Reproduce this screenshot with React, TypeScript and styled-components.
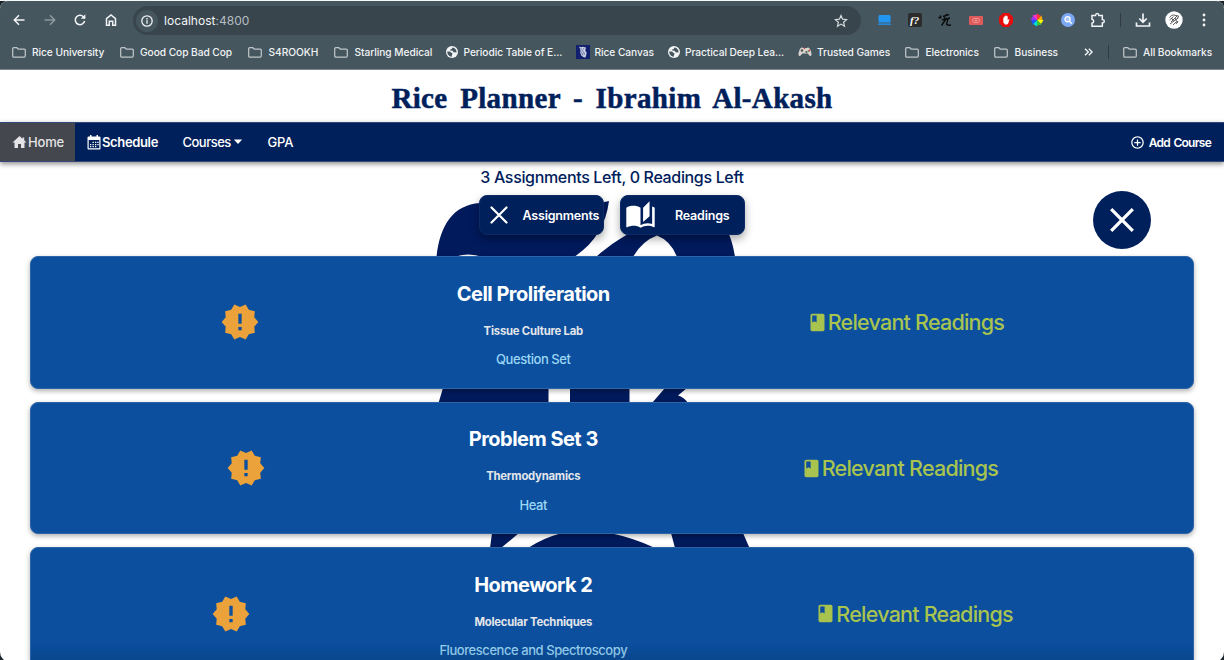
import React from "react";
import styled, { createGlobalStyle } from "styled-components";
import { MdNewReleases, MdClass, MdAutoStories, MdAddCircleOutline } from "react-icons/md";

const GlobalStyle = createGlobalStyle`
  * { box-sizing: border-box; }
  body {
    margin: 0;
    overflow: hidden;
    background: #1c2529;
    font-family: Inter, "Liberation Sans", sans-serif;
  }
  svg { display: block; flex: none; }
`;

const Viewport = styled.div`
  height: 660px;
  overflow: hidden;
  border-top: 1px solid #f4f6f7;
`;

const Window = styled.div`
  height: 661px;
  display: flex;
  flex-direction: column;
  border-radius: 8px 8px 10px 10px;
  overflow: hidden;
  background: #fff;
`;

/* ---------- browser chrome ---------- */

const Chrome = styled.header`
  flex: none;
  height: 69px;
  background: #46565f;
  border-bottom: 1px solid #7d888e;
  color: #f1f4f5;
`;

const AddressRow = styled.div`
  display: flex;
  align-items: center;
  height: 38px;
  padding: 0 12px;
`;

const NavIcons = styled.div`
  display: flex;
  gap: 16.5px;
  width: 121px;
`;

const AddressBar = styled.div`
  display: flex;
  align-items: center;
  width: 728px;
  height: 29px;
  margin-top: 1px;
  padding: 0 13px 0 3px;
  border-radius: 15px;
  background: #39454c;
`;

const InfoBadge = styled.span`
  display: grid;
  place-items: center;
  width: 22px;
  height: 22px;
  border-radius: 50%;
  background: #46565f;
`;

const Url = styled.span`
  flex: 1;
  padding-left: 6px;
  font-size: 12px;
  letter-spacing: 0.02px;
  color: #f3f5f6;
`;

const Port = styled.span`
  color: #b5bdc1;
`;

const Extensions = styled.div`
  display: flex;
  align-items: center;
  gap: 12.6px;
  margin-left: 14px;
`;

const Slot = styled.span`
  display: grid;
  place-items: center;
  width: 18px;
  height: 18px;
`;

const FnBadge = styled.span`
  display: grid;
  place-items: center;
  width: 14px;
  height: 14px;
  border-radius: 2px;
  background: #2c2c2c;
  color: #fff;
  font: italic bold 11px/14px "Liberation Serif", serif;
`;

const Divider = styled.span<{ $h: number }>`
  width: 1px;
  height: ${(p) => p.$h}px;
  background: #2f3b41;
`;

const ChromeEnd = styled.div`
  display: flex;
  align-items: center;
  gap: 14px;
  margin-left: 13px;
`;

const Kebab = styled.svg`
  margin-left: 5px;
`;

const BookmarkRow = styled.nav`
  display: flex;
  align-items: center;
  height: 26px;
  padding-left: 12px;
  font-size: 10.2px;
  font-weight: 500;
  letter-spacing: -0.06px;
`;

const Bookmark = styled.span<{ $w: number; $gap: number }>`
  display: flex;
  flex: none;
  align-items: center;
  gap: ${(p) => p.$gap}px;
  width: ${(p) => p.$w}px;
  white-space: nowrap;
`;

const More = styled.span`
  width: 24px;
`;

/* ---------- site header ---------- */

const Title = styled.h1`
  flex: none;
  margin: 0;
  height: 52px;
  color: #00205b;
  text-align: center;
  font: bold 29px/56px "Liberation Serif", serif;
  letter-spacing: 0.35px;
  word-spacing: 5px;
  -webkit-text-stroke: 0.5px #00205b;
`;

const NavBar = styled.nav`
  position: relative;
  z-index: 2;
  flex: none;
  display: flex;
  align-items: center;
  height: 40px;
  background: #00205b;
  border-top: 1px solid #34497a;
  border-bottom: 1px solid #34497a;
  box-shadow: 0 2px 5px rgba(0, 0, 0, 0.45);
  color: #fff;
  font-size: 13px;
  font-weight: 500;
`;

const NavItem = styled.a<{ $active?: boolean; $w: number; $ls?: number; $bold?: boolean }>`
  display: flex;
  align-items: center;
  gap: 1px;
  width: ${(p) => p.$w}px;
  height: 100%;
  padding-left: 12px;
  background: ${(p) => (p.$active ? "#44474d" : "transparent")};
  color: ${(p) => (p.$active ? "#e4e4e6" : "#fff")};
  font-weight: ${(p) => (p.$bold ? 600 : 500)};
  letter-spacing: ${(p) => p.$ls ?? 0}px;
`;

const Caret = styled.svg`
  margin-left: 1px;
`;

const AddCourse = styled.a`
  display: flex;
  align-items: center;
  gap: 4px;
  margin-left: auto;
  padding-right: 13px;
  font-size: 12px;
  font-weight: 600;
  letter-spacing: -0.73px;
  word-spacing: 1px;
`;

/* ---------- content ---------- */

const Content = styled.main`
  position: relative;
  flex: 1;
  min-height: 0;
  padding: 0 30px;
`;

const Mark = styled.svg`
  position: absolute;
  left: 420px;
  top: 29px;
  z-index: 0;
`;

const Summary = styled.p`
  position: relative;
  margin: 0;
  height: 33px;
  padding-top: 5px;
  text-align: center;
  color: #00205b;
  font-size: 16px;
  line-height: 21px;
  font-weight: 500;
  letter-spacing: -0.34px;
`;

const Tabs = styled.div`
  position: relative;
  display: flex;
  justify-content: center;
  gap: 16px;
  height: 61px;
`;

const Tab = styled.button<{ $pad: number; $gap: number }>`
  display: flex;
  align-items: center;
  gap: ${(p) => p.$gap}px;
  width: 125px;
  height: 40px;
  padding: 0 0 0 ${(p) => p.$pad}px;
  border: 1px solid #0b2a66;
  border-radius: 8px;
  background: #00205b;
  box-shadow: 0 4px 9px rgba(0, 0, 0, 0.35);
  color: #fff;
  font: 600 12.5px Inter, "Liberation Sans", sans-serif;
  letter-spacing: -0.2px;
`;

const CloseFab = styled.button`
  position: absolute;
  z-index: 1;
  left: 1093px;
  top: 29px;
  display: grid;
  place-items: center;
  width: 58px;
  height: 58px;
  padding: 0;
  border: 0;
  border-radius: 50%;
  background: #00205b;
`;

const Cards = styled.section`
  position: relative;
  display: grid;
  gap: 13px;
`;

const Card = styled.article`
  display: flex;
  justify-content: space-evenly;
  align-items: center;
  column-gap: 8px;
  height: 132.7px;
  border: 1px solid #2b65a8;
  border-radius: 8px;
  background: #0b4f9e;
  box-shadow: 0 2px 5px rgba(0, 0, 0, 0.32);
`;

const Details = styled.div`
  display: flex;
  flex-direction: column;
  align-items: center;
  padding-top: 5px;
  white-space: nowrap;
`;

const Name = styled.h2`
  margin: 0;
  color: #fff;
  font-size: 20px;
  line-height: 26px;
  font-weight: 700;
  letter-spacing: -0.52px;
`;

const Course = styled.h3`
  margin: 15px 0 0;
  color: #e3e6ea;
  font-size: 11.3px;
  line-height: 18px;
  font-weight: 700;
  letter-spacing: -0.22px;
`;

const Kind = styled.p`
  margin: 9.500px 0 0;
  color: #9bd7f5;
  font-size: 13px;
  line-height: 20px;
  font-weight: 500;
  letter-spacing: -0.44px;
`;

const Readings = styled.a`
  display: flex;
  align-items: center;
  color: #a8c44f;
  font-size: 21.5px;
  font-weight: 500;
  letter-spacing: -0.77px;
  white-space: nowrap;
`;

const BottomShade = styled.div`
  position: absolute;
  left: 31px;
  right: 31px;
  bottom: 0;
  height: 20px;
  background: linear-gradient(rgba(0, 25, 60, 0), rgba(0, 25, 60, 0.18));
`;

const Folder = () => (
  <svg width="14" height="11" viewBox="0 0 14 11" fill="none" stroke="#bfc5c8" strokeWidth="1.25">
    <path d="M.7 9V1.800Q.7.7 1.800.7h3l1.500 1.500h5.900q1.100 0 1.100 1.100V9q0 1.200-1.100 1.200H1.800Q.7 10.200.7 9z" />
  </svg>
);

const Globe = () => (
  <svg width="12" height="12" viewBox="0 0 12 12">
    <circle cx="6" cy="6" r="6" fill="#f2f4f5" />
    <path d="M1.300 5.500h2.200q1.300.1 1.500 1.200l1.300.3q.6 1-.4 1.800v1.900C3 10.600 1.100 8.300 1.300 5.500zM6.300 1.400L5.800 3 4.200 3.600v1l2.300.2L7.600 6.200l2.900.3C10.900 4 9 1.700 6.300 1.400z" fill="#46565f" />
  </svg>
);

const Owl = () => (
  <svg width="14" height="14" viewBox="0 0 14 14">
    <rect width="14" height="14" fill="#10206f" />
    <path d="M3 1.500l2 .8 1.500-.6 2 .6 1-.3.300 2-.6 1.200 1.500 2.500-.6 2.800-.6 2-1.800-.3-2.300-1.500-1.300-3.200.3-2.500z" fill="#c9cfe3" />
    <path d="M4.500 3.500l1.300.6M7 4l1.200-.5M6.300 4.800v1.400M5.500 7.300l1.500 3M7.500 6.500l1 3M4.200 6l1 .6" stroke="#10206f" strokeWidth=".6" />
  </svg>
);

const Gamepad = () => (
  <svg width="14" height="10" viewBox="0 0 14 10">
    <path d="M3 .8Q4.500.2 5.300 1h3.400Q9.500.2 11 .8q1.300.8 2.200 4.200.7 3.500-.4 4-1.300.4-3-2.500H4.200Q2.500 9.400 1.200 9 .1 8.500.8 5 1.700 1.600 3 .8z" fill="#d8d4d0" />
    <circle cx="4" cy="3.500" r="1.300" fill="#555" />
    <circle cx="8.400" cy="5" r="1" fill="#555" />
    <circle cx="6.500" cy="1.300" r=".8" fill="#d8362c" />
    <circle cx="11.300" cy="3.500" r=".9" fill="#d8362c" />
    <circle cx="10.200" cy="4.500" r=".8" fill="#35a14b" />
  </svg>
);

const icons = { folder: Folder, globe: Globe, owl: Owl, pad: Gamepad };

const bookmarks: { icon: keyof typeof icons; text: string; w: number; gap: number }[] = [
  { icon: "folder", text: "Rice University", w: 108, gap: 6 },
  { icon: "folder", text: "Good Cop Bad Cop", w: 128, gap: 6 },
  { icon: "folder", text: "S4ROOKH", w: 86, gap: 6.5 },
  { icon: "folder", text: "Starling Medical", w: 112, gap: 6.5 },
  { icon: "globe", text: "Periodic Table of E...", w: 129.5, gap: 5.5 },
  { icon: "owl", text: "Rice Canvas", w: 92, gap: 5 },
  { icon: "globe", text: "Practical Deep Lea...", w: 130.5, gap: 5.5 },
  { icon: "pad", text: "Trusted Games", w: 107, gap: 5 },
  { icon: "folder", text: "Electronics", w: 89, gap: 6.5 },
  { icon: "folder", text: "Business", w: 90, gap: 6.5 },
];

const assignments = [
  { name: "Cell Proliferation", course: "Tissue Culture Lab", kind: "Question Set" },
  { name: "Problem Set 3", course: "Thermodynamics", kind: "Heat" },
  { name: "Homework 2", course: "Molecular Techniques", kind: "Fluorescence and Spectroscopy" },
];

const line = { fill: "none", stroke: "#f1f4f5", strokeWidth: 1.5 } as const;

const wheel = ["#f33", "#fa0", "#ff0", "#3c3", "#0dd", "#25f", "#93f", "#f3c"];

function BrowserChrome() {
  return (
    <Chrome>
      <AddressRow>
        <NavIcons>
          <svg width="14" height="14" viewBox="0 0 14 14" {...line}><path d="M12.500 7H2.500M7 2.300L2.300 7 7 11.700" /></svg>
          <svg width="14" height="14" viewBox="0 0 14 14" {...line} stroke="#8d989e"><path d="M1.500 7h10M7 2.300L11.700 7 7 11.700" /></svg>
          <svg width="14" height="14" viewBox="0 0 14 14" {...line}><path d="M11.600 8A4.700 4.700 0 1 1 10.400 3.700L12 5.300" /><path d="M12.300 1.200v4.600H7.800z" fill="#f1f4f5" stroke="none" /></svg>
          <svg width="14" height="14" viewBox="0 0 14 14" {...line}><path d="M2.500 5.600L7 2l4.500 3.600v6.700H8.700V8.300H5.300v4H2.500z" /></svg>
        </NavIcons>
        <AddressBar>
          <InfoBadge>
            <svg width="12" height="12" viewBox="0 0 12 12" {...line} strokeWidth="1.300"><circle cx="6" cy="6" r="5.200" /><path d="M6 5.300v3.500M6 3v1.400" /></svg>
          </InfoBadge>
          <Url>localhost<Port>:4800</Port></Url>
          <svg width="14" height="14" viewBox="0 0 14 14" fill="none" stroke="#d5dadc" strokeWidth="1.200"><path d="M7 1.500l1.600 3.700 4 .4-3 2.600.9 4L7 10.100l-3.500 2.100.9-4-3-2.600 4-.4z" /></svg>
        </AddressBar>
        <Extensions>
          <Slot><svg width="13" height="10" viewBox="0 0 13 10"><rect x=".5" width="12" height="7.500" rx="1.200" fill="#2196f3" /><rect y="8.500" width="13" height="1.300" fill="#2196f3" /></svg></Slot>
          <Slot><FnBadge>f?</FnBadge></Slot>
          <Slot><svg width="14" height="14" viewBox="0 0 14 14" fill="none" stroke="#0b0d0e" strokeWidth="1.400"><path d="M.5 5l3-1.500M2 2.500l.8 3M5 3.500l6-2M8.500 1L6 6M4 7l8-2M8 6L3.500 12.500M10 6L8.500 11q1.500 2 4.500.8" /></svg></Slot>
          <Slot><svg width="14" height="9" viewBox="0 0 14 9"><rect width="14" height="9" rx="1" fill="#df5b5b" /><ellipse cx="7" cy="4.500" rx="3.500" ry="2.200" fill="none" stroke="#f3a5a5" strokeWidth=".8" /><circle cx="7" cy="4.500" r=".9" fill="#f3a5a5" /></svg></Slot>
          <Slot><svg width="14" height="14" viewBox="0 0 14 14"><path d="M4.100 0h5.800L14 4.100v5.800L9.900 14H4.100L0 9.900V4.100z" fill="#e60d0d" /><path d="M4.300 7V4.500h1V3.200h1.200v-.7h1.100v.8h1.100v4l1-1h.8L9.200 10.500 8 11.500H6L4.300 9.500z" fill="#fff" /></svg></Slot>
          <Slot>
            <svg width="14" height="14" viewBox="-7 -7 14 14">
              {wheel.map((c, i) => (
                <path key={c} d="M0 0L0-6.500L3.900-3.900z" fill={c} transform={`rotate(${i * 45})`} />
              ))}
            </svg>
          </Slot>
          <Slot><svg width="14" height="14" viewBox="0 0 14 14"><circle cx="7" cy="7" r="7" fill="#7ba7f5" /><circle cx="6.500" cy="6.300" r="2.600" fill="#a8c6fb" stroke="#fff" strokeWidth="1.200" /><path d="M8.500 8.400l2.300 2.300" stroke="#fff" strokeWidth="1.300" /></svg></Slot>
          <Slot><svg width="16" height="16" viewBox="0 0 16 16" {...line}><path d="M2 3.500h3.500q.2-2 1.700-2t1.700 2H12.300v4q2 .2 2 1.700t-2 1.700v3.300H2v-3q1.700-.2 1.700-1.900T2 7.300z" /></svg></Slot>
        </Extensions>
        <ChromeEnd>
          <Divider $h={14} />
          <svg width="16" height="16" viewBox="0 0 16 16" {...line} strokeWidth="1.700"><path d="M8 1.500v8.300M4.300 6.500L8 10.200l3.700-3.700M1.500 10.500V14h13v-3.500" /></svg>
          <svg width="18" height="18" viewBox="0 0 18 18"><circle cx="9" cy="9" r="8.700" fill="#fff" /><path d="M4.500 6.500q2-3 4-2.500l5 1-1 3M4.500 9l4-3.500M6 11l6-6M5 13l4-3 4-3M8 14l3-3M6.500 7l2 3M10 7l2.500 5M13 10l-2 3" fill="none" stroke="#333" strokeWidth=".8" /></svg>
          <Kebab width="4" height="14" viewBox="0 0 4 14" fill="#f1f4f5"><circle cx="2" cy="2" r="1.400" /><circle cx="2" cy="7" r="1.400" /><circle cx="2" cy="12" r="1.400" /></Kebab>
        </ChromeEnd>
      </AddressRow>
      <BookmarkRow>
        {bookmarks.map((b) => {
          const Icon = icons[b.icon];
          return (
            <Bookmark key={b.text} $w={b.w} $gap={b.gap}><Icon />{b.text}</Bookmark>
          );
        })}
        <More><svg width="9" height="8" viewBox="0 0 9 8" {...line} strokeWidth="1.400"><path d="M1 .7L4.300 4 1 7.300M4.800.7L8.100 4 4.800 7.300" /></svg></More>
        <Bookmark $w={14.5} $gap={0}><Divider $h={14} /></Bookmark>
        <Bookmark $w={100} $gap={6.5}><Folder />All Bookmarks</Bookmark>
      </BookmarkRow>
    </Chrome>
  );
}

export default function App() {
  return (
    <>
      <GlobalStyle />
      <Viewport>
        <Window>
          <BrowserChrome />
          <Title>Rice Planner - Ibrahim Al-Akash</Title>
          <NavBar>
            <NavItem $active $w={75} $ls={-0.2}>
              <svg width="15" height="14" viewBox="0 0 15 14" fill="currentColor"><path d="M7.500 1L10.500 3.700V2.500h1.700v2.800L14.500 7.500H12.500V13H9V9H6v4H2.500V7.500H.5z" /></svg>
              Home
            </NavItem>
            <NavItem $w={95.5} $ls={-0.36} $bold>
              <svg width="14" height="15" viewBox="0 0 14 15">
                <path d="M3 0h1.500v1.500h5V0H11v1.500h1.500q1 0 1 1V13.500q0 1-1 1h-11q-1 0-1-1V2.500q0-1 1-1H3z" fill="#fff" />
                <path d="M1.700 5h10.600v8.300H1.700z" fill="#00205b" />
                <path d="M5.500 6.700h1.300V8H5.500zM8 6.700h1.300V8H8zM10.300 6.700h1.300V8h-1.300zM3 8.900h1.300v1.300H3zM5.500 8.900h1.300v1.300H5.500zM8 8.900h1.300v1.300H8zM10.300 8.900h1.300v1.300h-1.300zM3 11h1.300v1.200H3zM5.500 11h1.300v1.200H5.500zM8 11h1.300v1.200H8z" fill="#fff" />
              </svg>
              Schedule
            </NavItem>
            <NavItem $w={85} $ls={-0.52}>
              Courses
              <Caret width="10" height="6" viewBox="0 0 10 6"><path d="M.8.5h8.400L5 5z" fill="#fff" /></Caret>
            </NavItem>
            <NavItem $w={60} $ls={-0.2}>GPA</NavItem>
            <AddCourse><MdAddCircleOutline size={15} />Add Course</AddCourse>
          </NavBar>
          <Content>
            <Mark width="340" height="360" viewBox="420 191 340 360" fill="#001a5c">
              <path d="M436.500 257C440 225 453 205 480 203H600L609 201C606 225 594 244 574 257H483Q468 252 454 257z" />
              <path d="M596 257C607 247 618 240 628 234L700 205C722 214 732 234 735 257H677Q671 241 657 235.500Q642 241 633 257z" />
              <path d="M443 388H548.500V403H438.500zM570 388H629.500V403H570zM665 388H687L678 395.500Q684 397 688 403H652z" />
              <path d="M492 533H519L501 548H490zM528 548Q543 538 562 533H610Q634 538 655 548zM671 533H743L749.500 548H675z" />
            </Mark>
            <Summary>3 Assignments Left, 0 Readings Left</Summary>
            <Tabs>
              <Tab $pad={10} $gap={14.5}>
                <svg width="18" height="18" viewBox="0 0 18 18" stroke="#fff" strokeWidth="2.200" strokeLinecap="round"><path d="M1.500 1.500l15 15M16.500 1.500l-15 15" /></svg>
                Assignments
              </Tab>
              <Tab $pad={4} $gap={19}><MdAutoStories size={31} />Readings</Tab>
            </Tabs>
            <CloseFab aria-label="Close">
              <svg width="24" height="24" viewBox="0 0 24 24" stroke="#fff" strokeWidth="3.300"><path d="M1.200 1.200l21.600 21.600M22.800 1.200L1.200 22.800" /></svg>
            </CloseFab>
            <Cards>
              {assignments.map((a) => (
                <Card key={a.name}>
                  <MdNewReleases size={40} color="#eba23a" />
                  <Details>
                    <Name>{a.name}</Name>
                    <Course>{a.course}</Course>
                    <Kind>{a.kind}</Kind>
                  </Details>
                  <Readings><MdClass size={21} />Relevant Readings</Readings>
                </Card>
              ))}
            </Cards>
            <BottomShade />
          </Content>
        </Window>
      </Viewport>
    </>
  );
}
